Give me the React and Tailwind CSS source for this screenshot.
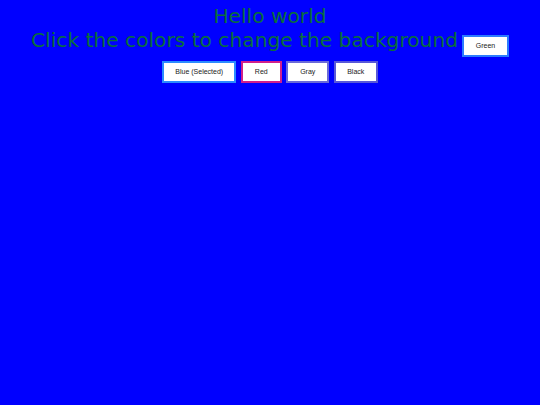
const colors = [
  { name: "Blue (Selected)", cls: "w-[74px] border-[#2b8bff]" },
  { name: "Red", cls: "w-[41px] border-[#d0208a]" },
  { name: "Gray", cls: "w-[43px] border-[#6a6ad8]" },
  { name: "Black", cls: "w-[44px] border-[#5858d8]" },
];

export default function App() {
  return (
    <div className="min-h-[405px] w-full bg-[#0000ff] pt-1 text-center font-['Liberation_Sans',Arial,sans-serif]">
      {/* heading */}
      <h1 className="font-['DejaVu_Sans',sans-serif] text-[20.2px] leading-[24px] text-[#0a6e3c]">
        Hello world
        <br />
        Click the colors to change the background
        <button className="ml-1 inline-block h-[22px] w-[47px] border-2 border-[#2b7bff] bg-white align-[-1px] font-['Liberation_Sans',Arial,sans-serif] text-[7px] leading-[18px] text-[#222]">
          Green
        </button>
      </h1>

      {/* color buttons */}
      <div className="mt-1 flex justify-center gap-[4.5px]">
        {colors.map((c) => (
          <button
            key={c.name}
            className={`h-[22px] border-2 bg-white text-[7px] text-[#222] ${c.cls}`}
          >
            {c.name}
          </button>
        ))}
      </div>
    </div>
  );
}
